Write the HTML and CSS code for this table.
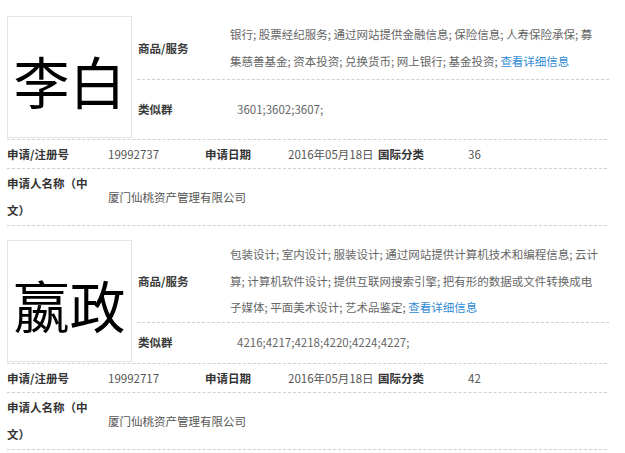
FILE: index.html
```html
<!DOCTYPE html>
<html lang="zh-CN">
<head>
<meta charset="utf-8">
<title>商标信息</title>
<link rel="stylesheet" href="styles.css">
</head>
<body>
<div class="page">
  <section class="entry">
    <div class="entry-top">
      <div class="mark">李白</div>
      <div class="details">
        <div class="drow goods">
          <div class="dlabel">商品/服务</div>
          <div class="dvalue">银行; 股票经纪服务; 通过网站提供金融信息; 保险信息; 人寿保险承保; 募集慈善基金; 资本投资; 兑换货币; 网上银行; 基金投资; <a class="more" href="#">查看详细信息</a></div>
        </div>
        <div class="drow similar">
          <div class="dlabel">类似群</div>
          <div class="dvalue num">3601;3602;3607;</div>
        </div>
      </div>
    </div>
    <div class="info">
      <div class="ilabel c1">申请/注册号</div>
      <div class="ivalue c2">19992737</div>
      <div class="ilabel c3">申请日期</div>
      <div class="ivalue c4">2016年05月18日</div>
      <div class="ilabel c5">国际分类</div>
      <div class="ivalue">36</div>
    </div>
    <div class="info name">
      <div class="ilabel c1"><span class="wrap">申请人名称（中文）</span></div>
      <div class="ivalue">厦门仙桃资产管理有限公司</div>
    </div>
  </section>

  <section class="entry">
    <div class="entry-top">
      <div class="mark">嬴政</div>
      <div class="details">
        <div class="drow goods">
          <div class="dlabel">商品/服务</div>
          <div class="dvalue">包装设计; 室内设计; 服装设计; 通过网站提供计算机技术和编程信息; 云计算; 计算机软件设计; 提供互联网搜索引擎; 把有形的数据或文件转换成电子媒体; 平面美术设计; 艺术品鉴定; <a class="more" href="#">查看详细信息</a></div>
        </div>
        <div class="drow similar">
          <div class="dlabel">类似群</div>
          <div class="dvalue num">4216;4217;4218;4220;4224;4227;</div>
        </div>
      </div>
    </div>
    <div class="info">
      <div class="ilabel c1">申请/注册号</div>
      <div class="ivalue c2">19992717</div>
      <div class="ilabel c3">申请日期</div>
      <div class="ivalue c4">2016年05月18日</div>
      <div class="ilabel c5">国际分类</div>
      <div class="ivalue">42</div>
    </div>
    <div class="info name">
      <div class="ilabel c1"><span class="wrap">申请人名称（中文）</span></div>
      <div class="ivalue">厦门仙桃资产管理有限公司</div>
    </div>
  </section>
</div>
</body>
</html>
```

FILE: styles.css
```css
html, body {
  margin: 0;
  padding: 0;
  background: #ffffff;
}

body {
  font-family: "Noto Sans CJK SC", "Noto Sans", sans-serif;
  font-size: 11.5px;
  color: #555;
}

.page {
  width: 600px;
  padding: 16px 0 0 7px;
}

.entry + .entry {
  margin-top: 14px;
}

.entry-top {
  display: flex;
  padding-bottom: 1px;
  border-bottom: 1px dashed #cfcfcf;
}

.mark {
  flex: none;
  width: 125px;
  height: 122px;
  box-sizing: border-box;
  border: 1px solid #e4e4e4;
  display: flex;
  align-items: center;
  justify-content: center;
  font-size: 56px;
  line-height: 1;
  color: #000;
  padding-top: 5px;
}

.details {
  flex: 1;
  display: flex;
  flex-direction: column;
  margin-left: 5px;
}

.drow {
  display: flex;
  align-items: center;
}

.drow.goods {
  min-height: 61px;
  padding: 1px 0;
  border-bottom: 1px dashed #cfcfcf;
}

.drow.similar {
  flex: 1;
}

.dlabel {
  flex: none;
  width: 92px;
  padding-left: 1px;
  font-weight: bold;
  color: #3a3a3a;
}

.dvalue {
  width: 371.5px;
  line-height: 26.5px;
  color: #666;
}

.dvalue.num {
  padding-left: 7px;
}

.more {
  color: #2f8bd3;
  text-decoration: none;
}

.info {
  display: flex;
  align-items: center;
  height: 28px;
  border-bottom: 1px dashed #cfcfcf;
}

.info.name {
  height: auto;
  padding: 1px 0;
}

.ilabel {
  flex: none;
  font-weight: bold;
  color: #333;
}

.ivalue {
  color: #555;
}

.c1 { width: 101px; }
.c2 { width: 97px; flex: none; }
.c3 { width: 83px; }
.c4 { width: 90px; flex: none; }
.c5 { width: 90px; }

.wrap {
  display: block;
  width: 86px;
  line-height: 27px;
}
```
